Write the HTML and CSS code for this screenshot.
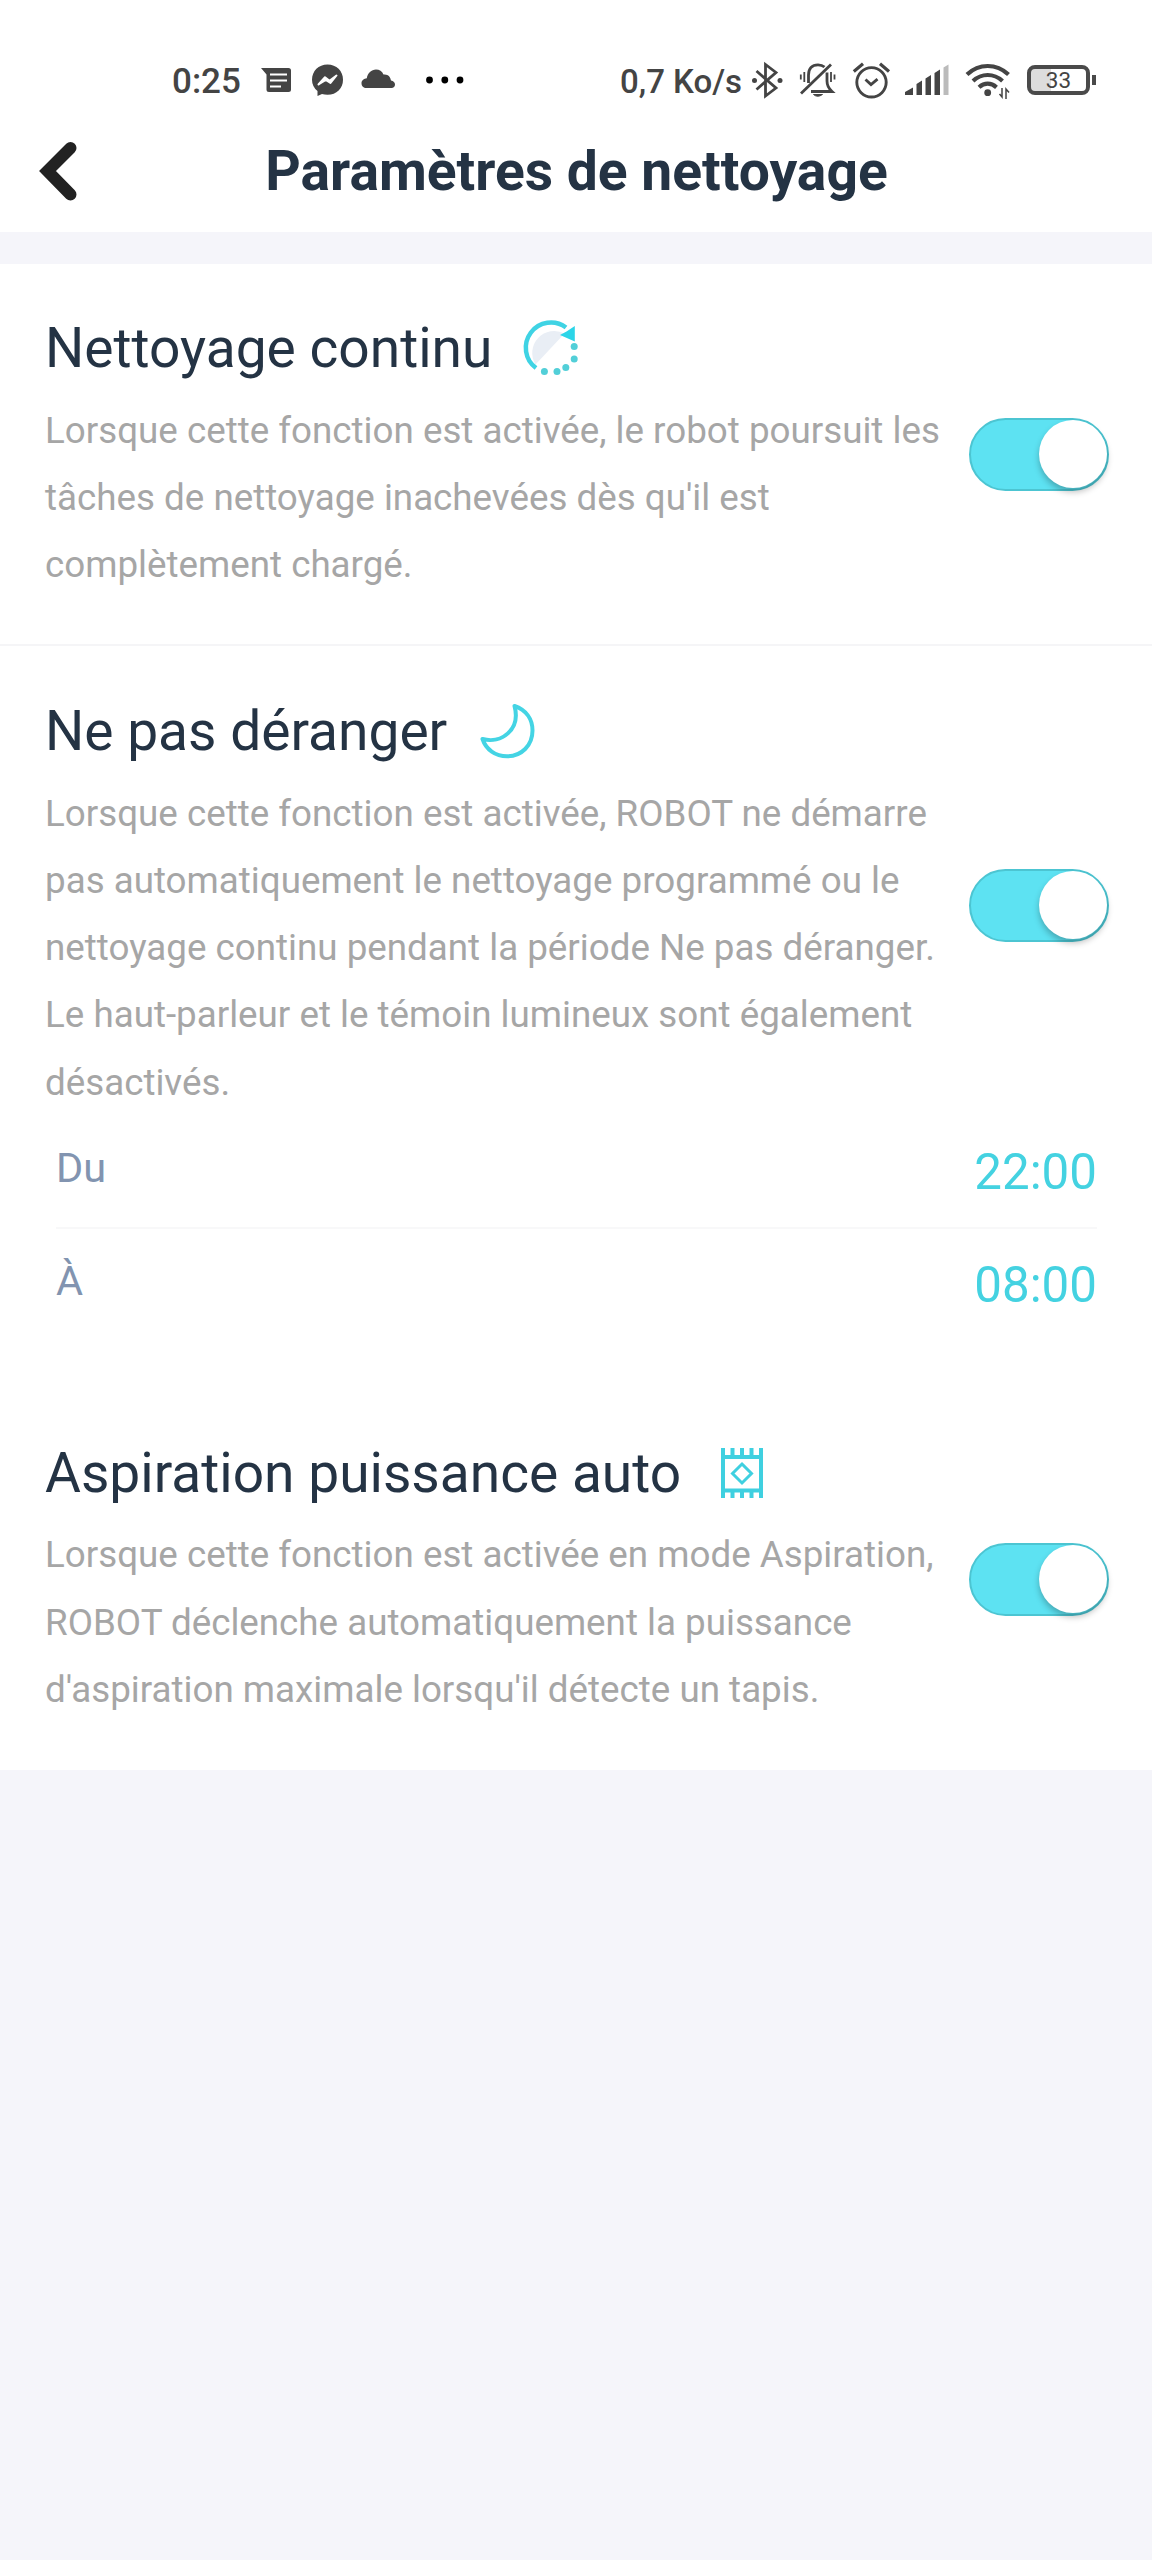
FILE: index.html
```html
<!DOCTYPE html>
<html lang="fr">
<head>
    <meta charset="utf-8">
    <title>Paramètres de nettoyage</title>
    <link rel="stylesheet" href="styles.css">
</head>
<body>
    <!-- Status bar -->
    <div class="status-bar">
        <span class="status-time">0:25</span>
        <svg class="icon-message" width="40" height="40" viewBox="0 0 40 40">
            <path d="M5 8H32.500Q35 8 35 10.500V29.500Q35 32 32.500 32H13Q10.500 32 10.500 29.500V14.500Z" fill="#444"/>
            <path d="M14 14.500H31M14 20.500H31M14 26.500H25" stroke="#fff" stroke-width="2.200"/>
        </svg>
        <svg class="icon-messenger" width="40" height="40" viewBox="0 0 40 40">
            <path d="M19.500 4.500C28.500 4.500 35 11 35 19.700S28.500 34.800 19.500 34.800Q16.500 34.800 14 34L9.500 36V31Q4 26.500 4 19.700C4 11 10.500 4.500 19.500 4.500Z" fill="#444"/>
            <path d="M10.500 24.500 17 17.200 21.500 20.800 28.500 15.500 22.500 23 17.800 19.800Z" fill="#fff" stroke="#fff" stroke-width="2" stroke-linejoin="round"/>
        </svg>
        <svg class="icon-cloud" width="40" height="40" viewBox="0 0 40 40">
            <path d="M8.500 28C5.500 28 3.500 26 3.500 23.200C3.500 20.300 6 18.500 8.800 18.300C9.500 13 13.500 9.500 18 9.500C21.500 9.500 24 11.300 25.500 14.500C30 13.800 32.500 17 33 20.500C35.500 21 37 22.500 37 24.500C37 26.500 35.500 28 33.500 28Z" fill="#444"/>
        </svg>
        <svg class="icon-dots" width="42" height="40" viewBox="0 0 42 40">
            <circle cx="5.500" cy="20" r="3.400"/>
            <circle cx="20.800" cy="20" r="3.400"/>
            <circle cx="36" cy="20" r="3.400"/>
        </svg>

        <span class="status-speed">0,7 Ko/s</span>
        <svg class="icon-bluetooth" width="40" height="40" viewBox="0 0 40 40" fill="none" stroke="#444" stroke-width="2.800">
            <path d="M9.500 11 29 28 18.500 36V4.500L29 12.500 9.500 29.500"/>
            <circle cx="7.500" cy="20.500" r="2.500" fill="#444" stroke="none"/>
            <circle cx="33" cy="20.500" r="2.500" fill="#444" stroke="none"/>
        </svg>
        <svg class="icon-bell" width="40" height="40" viewBox="0 0 40 40" fill="none" stroke="#444" stroke-width="2.800">
            <path d="M10.500 23V15C10.500 8.500 14 4.800 20 4.800Q24 4.800 26.500 7M29 12.500V21Q29 27 34 31.500H13"/>
            <path d="M3 33.500 33 4.500"/>
            <path d="M15.500 34.500Q19.500 38 24.500 34.500Z" fill="#444" stroke-width="1"/>
            <path d="M6.300 12V22M2.800 14.500V19.500M33 12V22M36.500 14.500V19.500" stroke-width="1.800"/>
        </svg>
        <svg class="icon-alarm" width="40" height="40" viewBox="0 0 40 40" fill="none" stroke="#444" stroke-width="2.900">
            <circle cx="20.500" cy="22.300" r="14.700"/>
            <path d="M14.500 19.500 20 24.500 26.500 19.200"/>
            <path d="M2.800 11.500 12 3.800M38 11.500 29 3.800" stroke-width="3.200"/>
        </svg>
        <svg class="icon-signal" width="50" height="40" viewBox="0 0 50 40">
            <path d="M3 35V32L11 27.500V35ZM14.500 35V24L20 20.500V35ZM23.500 35V18.500L29 15V35ZM32.500 35V13L38 9.500V35Z" fill="#444"/>
            <path d="M41.500 35V7.500L46.500 4.500V35Z" fill="#bbb"/>
        </svg>
        <svg class="icon-wifi" width="50" height="40" viewBox="0 0 50 40" fill="none" stroke="#444" stroke-width="4.200">
            <path d="M3 14.500Q12 6 23.700 6T44.500 14.500"/>
            <path d="M9 21Q15.500 15 23.700 15T38.500 21"/>
            <path d="M15 27.300Q19 23.700 23.700 23.700T32.500 27.300"/>
            <circle cx="23.700" cy="32.700" r="3.400" fill="#444" stroke="none"/>
            <path d="M38 28V37L35.500 34M42 39V29L45 32.500" stroke-width="1.500"/>
        </svg>
        <div class="battery">
            <div class="battery-body"><span>33</span></div>
            <div class="battery-tip"></div>
        </div>
    </div>

    <!-- Title bar -->
    <header class="header">
        <svg class="back" width="60" height="70" viewBox="0 0 60 70">
            <path d="M40.500 12 17.500 35 40.500 58.500" fill="none" stroke="#222" stroke-width="12" stroke-linecap="round" stroke-linejoin="miter"/>
        </svg>
        <h1>Paramètres de nettoyage</h1>
    </header>

    <main>
        <!-- Continuous cleaning -->
        <section class="setting">
            <div class="setting-row">
                <div class="setting-text">
                    <h2>Nettoyage continu
                        <svg class="icon-resume" width="60" height="60" viewBox="0 0 60 60">
                            <path d="M14.500 46.500A22 22 0 0 1 43.500 15.500Z" fill="#e9eef5"/>
                            <path d="M15 50A25 25 0 0 1 45 9.500" fill="none" stroke="#3fd3e4" stroke-width="4.500"/>
                            <path d="M53.800 8V23.500L39 17 45.500 13.500Z" fill="#2bd5e8"/>
                            <g fill="#52cfd8">
                                <circle cx="53.200" cy="28.500" r="3.500"/>
                                <circle cx="53.200" cy="41" r="3.500"/>
                                <circle cx="44.800" cy="49.500" r="3.500"/>
                                <circle cx="36" cy="53.500" r="3.500"/>
                                <circle cx="23.400" cy="53.500" r="3.500"/>
                            </g>
                        </svg>
                    </h2>
                    <p>Lorsque cette fonction est activée, le robot poursuit les tâches de nettoyage inachevées dès qu'il est complètement chargé.</p>
                </div>
                <div class="toggle"><div class="knob"></div></div>
            </div>
        </section>

        <!-- Do not disturb -->
        <section class="setting">
            <div class="setting-row">
                <div class="setting-text">
                    <h2>Ne pas déranger
                        <svg class="icon-moon" width="60" height="60" viewBox="0 0 60 60">
                            <path d="M36.500 5C48 9 54.500 18 54.500 29.500C54.500 44.500 43.500 55.300 29 55.300C17.500 55.300 8 48.500 4.500 38C23 43 43 29 36.500 5Z" fill="none" stroke="#44d4e4" stroke-width="4" stroke-linejoin="round"/>
                        </svg>
                    </h2>
                    <p>Lorsque cette fonction est activée, ROBOT ne démarre pas automatiquement le nettoyage programmé ou le nettoyage continu pendant la période Ne pas déranger. Le haut-parleur et le témoin lumineux sont également désactivés.</p>
                </div>
                <div class="toggle"><div class="knob"></div></div>
            </div>
            <div class="times">
                <div class="time-row">
                    <span class="label">Du</span>
                    <span class="value">22:00</span>
                </div>
                <div class="time-row">
                    <span class="label">À</span>
                    <span class="value">08:00</span>
                </div>
            </div>
        </section>

        <!-- Auto suction power -->
        <section class="setting">
            <div class="setting-row">
                <div class="setting-text">
                    <h2>Aspiration puissance auto
                        <svg class="icon-carpet" width="60" height="60" viewBox="0 0 60 60" fill="none" stroke="#3fd0e0">
                            <path d="M11 5V55M49 5V55" stroke-width="4"/>
                            <path d="M20.500 5V14M30 5V14M39.500 5V14M20.500 47V55M30 47V55M39.500 47V55" stroke-width="4"/>
                            <path d="M10 14H50M10 47.500H50" stroke-width="4"/>
                            <path d="M30 21 39.500 30.500 30 40 20.500 30.500Z" stroke-width="3"/>
                        </svg>
                    </h2>
                    <p>Lorsque cette fonction est activée en mode Aspiration, ROBOT déclenche automatiquement la puissance d'aspiration maximale lorsqu'il détecte un tapis.</p>
                </div>
                <div class="toggle"><div class="knob"></div></div>
            </div>
        </section>
    </main>
</body>
</html>
```
FILE: styles.css
```css
* {
    box-sizing: border-box;
}

body {
    margin: 0;
    width: 1152px;
    min-height: 2560px;
    font-family: Roboto, sans-serif;
    background-color: #f5f5fa;
}

h1, h2, p {
    margin: 0;
}

svg {
    display: block;
    flex-shrink: 0;
}

/* Status bar */
.status-bar {
    display: flex;
    height: 120px;
    padding: 60px 54px 0 172px;
    background-color: #fff;
    color: #444;
    font-size: 33px;
    font-weight: 500;
    line-height: 43px;
    white-space: nowrap;
}

.status-time {
    width: 84px;
    font-size: 35px;
}

.icon-messenger {
    margin-left: 12px;
}

.icon-cloud {
    margin-left: 10px;
}

.icon-dots {
    margin-left: 26px;
}

.status-speed {
    width: 127px;
    margin-left: auto;
}

.icon-bell {
    margin-left: 11px;
}

.icon-alarm {
    margin-left: 13px;
}

.icon-signal {
    margin-left: 11px;
}

.icon-wifi {
    margin-left: 12px;
}

.battery {
    display: flex;
    align-items: center;
    width: 71px;
    height: 30px;
    margin: 5px 0 0 13px;
}

.battery-body {
    width: 63px;
    height: 30px;
    border: 4px solid #4a4a4a;
    border-radius: 8px;
    background: linear-gradient(to right, #ddd 20px, #fff 20px);
    font-size: 22.5px;
    font-weight: 400;
    line-height: 23px;
    text-align: center;
}

.battery-tip {
    width: 4px;
    height: 10px;
    margin-left: 2px;
    background-color: #4a4a4a;
}

/* Title bar */
.header {
    display: flex;
    align-items: center;
    height: 112px;
    padding: 0 30px 10px;
    background-color: #fff;
}

.header h1 {
    flex: 1;
    margin-right: 59px;
    font-size: 55.2px;
    font-weight: 700;
    text-align: center;
    color: #243344;
}

/* Settings list */
main {
    margin-top: 32px;
    background-color: #fff;
}

.setting {
    padding: 52px 44px 47px 45px;
}

.setting:first-child {
    padding-bottom: 46px;
    border-bottom: 2px solid #f5f5f7;
}

.setting:nth-child(2) {
    padding-top: 53px;
    padding-bottom: 48px;
}

.setting-row {
    display: flex;
    align-items: center;
    justify-content: space-between;
}

.setting-text {
    width: 910px;
}

.setting h2 {
    display: flex;
    align-items: center;
    gap: 31px;
    height: 64px;
    margin-bottom: 16.6px;
    font-size: 55.1px;
    font-weight: 400;
    line-height: 64px;
    color: #243344;
}

.icon-resume {
    margin-left: -2px;
}

.setting p {
    font-size: 36.75px;
    line-height: 67.2px;
    color: #a6a6a6;
}

/* Toggle switch */
.toggle {
    display: flex;
    justify-content: flex-end;
    width: 140px;
    height: 73px;
    margin: 0 -1px 5px 0;
    border: 2px solid #4cc5d2;
    border-radius: 37px;
    background-color: #5de2f2;
}

.knob {
    width: 68px;
    height: 68px;
    border-radius: 50%;
    background-color: #fff;
    box-shadow: 0 4px 6px rgba(0, 0, 0, 0.25);
}

/* Time range */
.times {
    padding: 0 11px;
}

.time-row {
    display: flex;
    justify-content: space-between;
    height: 112px;
}

.time-row:first-child {
    height: 113px;
    border-bottom: 2px solid #f8f8f9;
}

.label {
    font-size: 41.5px;
    line-height: 104px;
    color: #8294b0;
}

.value {
    font-size: 49.3px;
    line-height: 112px;
    color: #44d2e1;
}
```
